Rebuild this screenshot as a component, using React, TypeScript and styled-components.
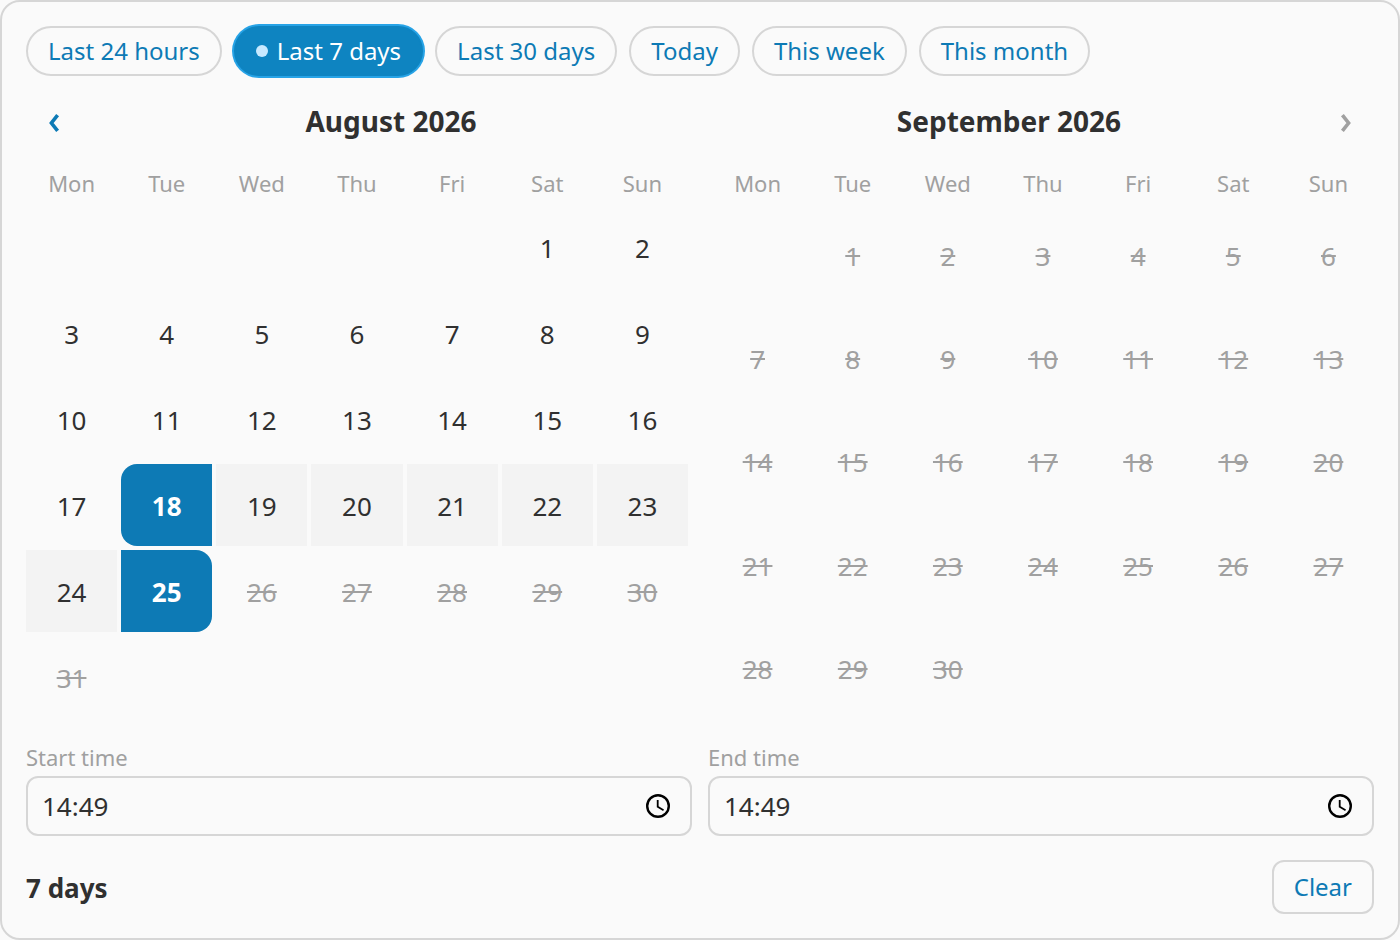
import React, { useId, useState } from "react";
import styled, { createGlobalStyle, css } from "styled-components";

const color = {
  surface: "#fafafa",
  border: "#d6d6d6",
  text: "#303030",
  muted: "#a0a0a0",
  accent: "#0d7ab5",
  accentActive: "#0e84c1",
  ring: "#27a3e6",
  dot: "#c7e9ff",
  range: "#f3f3f3",
};

const GlobalStyle = createGlobalStyle`
  *, *::before, *::after { box-sizing: border-box; }
  body {
    margin: 0;
    background: ${color.surface};
    color: ${color.text};
    font-family: "Noto Sans", sans-serif;
  }
  button, input { font-family: inherit; margin: 0; }
  button { cursor: pointer; }
  button:disabled { cursor: default; }
`;

const Picker = styled.main`
  display: flex;
  flex-direction: column;
  padding: 24px;
  background: ${color.surface};
  border: 2px solid ${color.border};
  border-radius: 20px;
`;

const Presets = styled.div`
  display: flex;
  flex-wrap: wrap;
  gap: 12px;
`;

const Preset = styled.button<{ $active: boolean }>`
  display: flex;
  align-items: center;
  gap: 9px;
  height: 50px;
  padding: 0 20px;
  border: 2px solid ${color.border};
  border-radius: 25px;
  background: transparent;
  color: ${color.accent};
  font-size: 24px;
  line-height: 32px;
  ${(p) =>
    p.$active &&
    css`
      border-color: ${color.accentActive};
      background: ${color.accentActive};
      color: #fff;
      box-shadow: 0 0 0 2px ${color.ring};
    `}
`;

const Dot = styled.span`
  width: 12px;
  height: 12px;
  border-radius: 50%;
  background: ${color.dot};
`;

const Months = styled.div`
  display: grid;
  grid-template-columns: 1fr 1fr;
  gap: 24px;
  margin-top: 20px;
`;

const Month = styled.section`
  display: flex;
  flex-direction: column;
`;

const MonthHeader = styled.header`
  display: flex;
  align-items: center;
  gap: 12px;
  height: 52px;
`;

const MonthTitle = styled.h2`
  flex: 1;
  margin: 0;
  padding-bottom: 2px;
  text-align: center;
  font-size: 28px;
  line-height: 40px;
  font-weight: 700;
`;

const NavButton = styled.button`
  display: grid;
  place-items: center;
  width: 56px;
  height: 52px;
  padding: 2px 0 0;
  border: 0;
  background: none;
  color: ${color.accent};
  &:disabled { color: ${color.muted}; }
`;

const weekGrid = css`
  display: grid;
  grid-template-columns: repeat(7, 1fr);
  gap: 4px;
`;

const Weekdays = styled.div`
  ${weekGrid}
  margin: 20px 0 8px;
  color: ${color.muted};
  font-size: 22px;
  line-height: 30px;
  text-align: center;
`;

const Days = styled.div`
  ${weekGrid}
  flex: 1;
  grid-auto-rows: minmax(82px, 1fr);
`;

type DayState = "plain" | "start" | "end" | "range" | "off";

const Day = styled.button<{ $state: DayState; $column?: number }>`
  ${(p) => p.$column && `grid-column-start: ${p.$column};`}
  padding: 1px 0 0;
  border: 0;
  background: transparent;
  color: ${color.text};
  font-size: 26px;
  line-height: 36px;
  ${(p) => p.$state === "range" && `background: ${color.range};`}
  ${(p) =>
    (p.$state === "start" || p.$state === "end") &&
    `background: ${color.accent}; color: #fff; font-weight: 700;`}
  ${(p) => p.$state === "start" && "border-radius: 16px 0 0 16px;"}
  ${(p) => p.$state === "end" && "border-radius: 0 16px 16px 0;"}
  &:disabled {
    color: ${color.muted};
    text-decoration: line-through;
  }
`;

const Times = styled.div`
  display: grid;
  grid-template-columns: 1fr 1fr;
  gap: 16px;
  margin-top: 24px;
`;

const TimeGroup = styled.div`
  display: flex;
  flex-direction: column;
  gap: 4px;
`;

const TimeLabel = styled.label`
  color: ${color.muted};
  font-size: 22px;
  line-height: 30px;
`;

const TimeBox = styled.div`
  display: flex;
  align-items: center;
  height: 60px;
  padding: 0 20px 0 14px;
  border: 2px solid ${color.border};
  border-radius: 12px;
`;

const TimeInput = styled.input`
  flex: 1;
  min-width: 0;
  padding: 0;
  border: 0;
  outline: 0;
  background: transparent;
  color: ${color.text};
  font-size: 26px;
  line-height: 36px;
`;

const ClockButton = styled.button`
  display: flex;
  padding: 0;
  border: 0;
  background: none;
  color: #000;
`;

const Footer = styled.footer`
  display: flex;
  align-items: center;
  justify-content: space-between;
  margin-top: 24px;
`;

const Summary = styled.strong`
  padding-top: 2px;
  font-size: 26px;
  line-height: 36px;
  font-weight: 700;
`;

const ClearButton = styled.button`
  height: 54px;
  padding: 0 20px;
  border: 2px solid ${color.border};
  border-radius: 12px;
  background: transparent;
  color: ${color.accent};
  font-size: 24px;
  line-height: 32px;
`;

const presets = ["Last 24 hours", "Last 7 days", "Last 30 days", "Today", "This week", "This month"];
const weekdays = ["Mon", "Tue", "Wed", "Thu", "Fri", "Sat", "Sun"];

const augustState = (day: number): DayState => {
  if (day === 18) return "start";
  if (day === 25) return "end";
  if (day > 25) return "off";
  return day > 18 ? "range" : "plain";
};

function Chevron({ direction }: { direction: "left" | "right" }) {
  return (
    <svg width="12" height="20" viewBox="0 0 12 20" fill="none" stroke="currentColor" strokeWidth="3.6" aria-hidden="true">
      <path d={direction === "left" ? "M9.6 2.1 3.4 10l6.2 7.9" : "M2.4 2.1 8.6 10l-6.2 7.9"} />
    </svg>
  );
}

function ClockIcon() {
  return (
    <svg width="24" height="24" viewBox="2 2 20 20" fill="currentColor" aria-hidden="true">
      <path d="M12 2a10 10 0 1 0 0 20 10 10 0 0 0 0-20zm0 18a8 8 0 1 1 0-16 8 8 0 0 1 0 16z" />
      <path d="M12.5 7H11v6l5.25 3.15.75-1.23-4.5-2.67z" />
    </svg>
  );
}

interface MonthGridProps {
  length: number;
  firstColumn: number;
  name: string;
  stateOf: (day: number) => DayState;
}

function MonthGrid({ length, firstColumn, name, stateOf }: MonthGridProps) {
  return (
    <>
      <Weekdays>
        {weekdays.map((d) => (
          <span key={d}>{d}</span>
        ))}
      </Weekdays>
      <Days role="group" aria-label={name}>
        {Array.from({ length }, (_, i) => i + 1).map((day) => (
          <Day
            key={day}
            type="button"
            $state={stateOf(day)}
            $column={day === 1 ? firstColumn : undefined}
            disabled={stateOf(day) === "off"}
          >
            {day}
          </Day>
        ))}
      </Days>
    </>
  );
}

function TimeField({ label }: { label: string }) {
  const id = useId();
  const [value, setValue] = useState("14:49");
  return (
    <TimeGroup>
      <TimeLabel htmlFor={id}>{label}</TimeLabel>
      <TimeBox>
        <TimeInput id={id} type="text" value={value} onChange={(e) => setValue(e.target.value)} />
        <ClockButton type="button" aria-label="Show time picker">
          <ClockIcon />
        </ClockButton>
      </TimeBox>
    </TimeGroup>
  );
}

export default function App() {
  const [preset, setPreset] = useState("Last 7 days");

  return (
    <>
      <GlobalStyle />
      <Picker>
        <Presets>
          {presets.map((p) => (
            <Preset
              key={p}
              type="button"
              $active={p === preset}
              aria-pressed={p === preset}
              onClick={() => setPreset(p)}
            >
              {p === preset && <Dot />}
              {p}
            </Preset>
          ))}
        </Presets>
        <Months>
          <Month>
            <MonthHeader>
              <NavButton type="button" aria-label="Previous month">
                <Chevron direction="left" />
              </NavButton>
              <MonthTitle>August 2026</MonthTitle>
            </MonthHeader>
            <MonthGrid name="August 2026" length={31} firstColumn={6} stateOf={augustState} />
          </Month>
          <Month>
            <MonthHeader>
              <MonthTitle>September 2026</MonthTitle>
              <NavButton type="button" aria-label="Next month" disabled>
                <Chevron direction="right" />
              </NavButton>
            </MonthHeader>
            <MonthGrid name="September 2026" length={30} firstColumn={2} stateOf={() => "off"} />
          </Month>
        </Months>
        <Times>
          <TimeField label="Start time" />
          <TimeField label="End time" />
        </Times>
        <Footer>
          <Summary>7 days</Summary>
          <ClearButton type="button">Clear</ClearButton>
        </Footer>
      </Picker>
    </>
  );
}
